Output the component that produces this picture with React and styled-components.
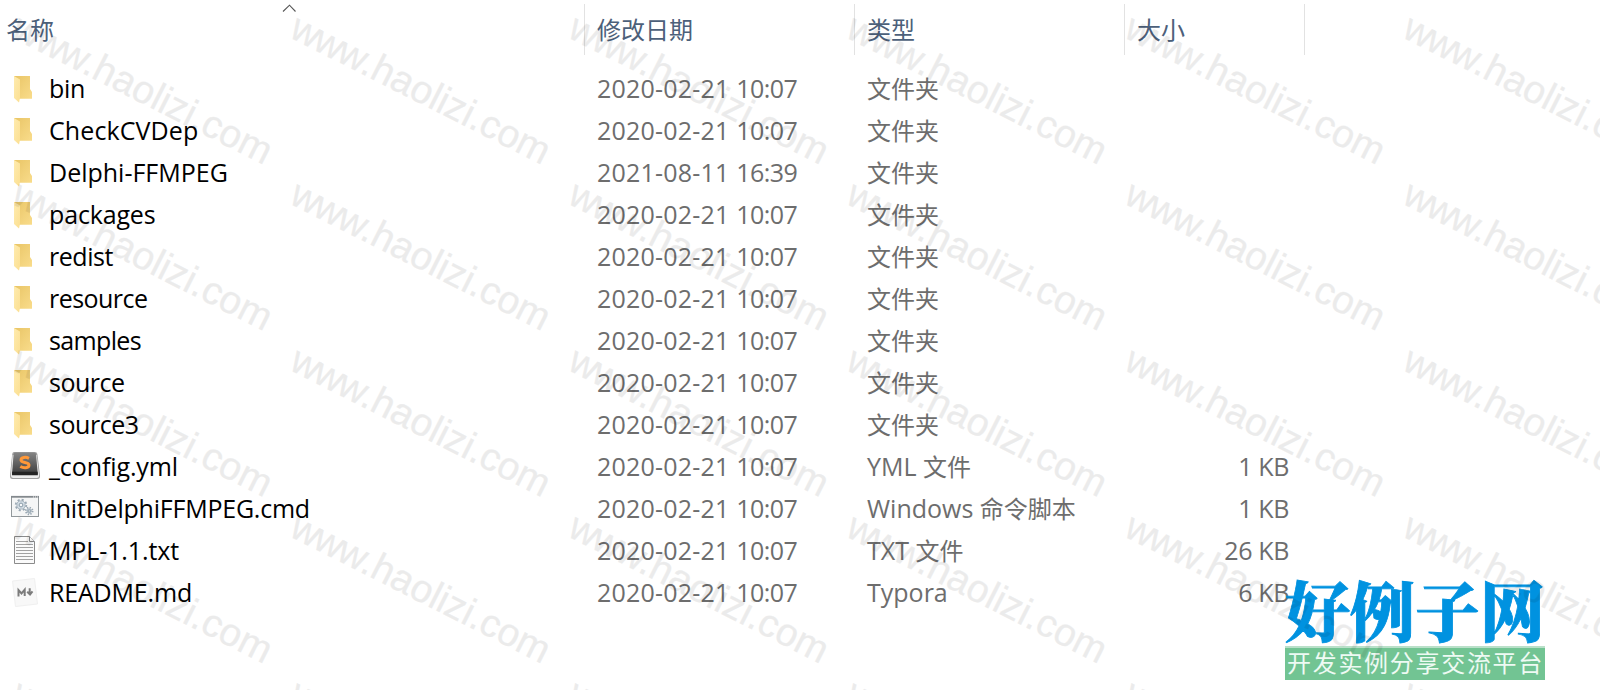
import React from 'react';
import styled, { createGlobalStyle } from 'styled-components';

const Global = createGlobalStyle`
  body { margin: 0; background: #fff; overflow: hidden; }
  * { box-sizing: border-box; }
`;

const Window = styled.main`
  position: relative;
  width: 1600px;
  height: 690px;
  overflow: hidden;
  background: #fff;
  font-family: 'Open Sans', 'Noto Sans CJK SC', sans-serif;
  font-size: 25px;
  color: #6d6d6d;
`;

const columns = '585px 270px 270px 180px';

const Header = styled.div`
  display: grid;
  grid-template-columns: ${columns};
  height: 51px;
  margin-top: 4px;
`;

const HeaderCell = styled.div`
  position: relative;
  display: flex;
  align-items: center;
  padding-left: ${(p) => p.$pad}px;
  padding-bottom: 1px;
  border-right: 1px solid #e2e2e2;
  font-family: 'Noto Sans CJK SC', sans-serif;
  font-size: 24px;
  line-height: 36px;
  color: #4c607a;
`;

const SortArrow = styled.svg`
  position: absolute;
  left: 282px;
  top: 0;
`;

const List = styled.div`
  padding-top: 13px;
`;

const Row = styled.div`
  display: grid;
  grid-template-columns: ${columns};
  height: 42px;
  line-height: 40px;
  white-space: nowrap;
`;

const NameCell = styled.div`
  display: flex;
  align-items: flex-start;
  padding-left: 9px;
  color: #000;
`;

const IconBox = styled.span`
  display: flex;
  width: 40px;
  height: 34px;
  margin-top: 4px;
  flex: none;
`;

const Label = styled.span`
  letter-spacing: ${(p) => p.$track || 0}px;
`;

const Cell = styled.div`
  padding-left: 12px;
`;

const Day = styled.span`
  letter-spacing: 0.2px;
`;

const Time = styled.span`
  letter-spacing: -0.5px;
`;

const SizeCell = styled.div`
  padding-right: 16px;
  text-align: right;
  letter-spacing: -0.35px;
`;

const Han = styled.span`
  font-family: 'Noto Sans CJK SC', sans-serif;
  font-size: 24px;
  line-height: 1;
`;

const Watermark = styled.svg`
  position: absolute;
  inset: 0;
  pointer-events: none;
`;

const Brand = styled.div`
  position: absolute;
  left: 1285px;
  top: 576px;
  width: 260px;
  height: 104px;
`;

const BrandName = styled.div`
  height: 70px;
  font-family: 'Noto Serif CJK SC', 'Noto Sans CJK SC', serif;
  font-weight: 900;
  font-size: 65px;
  line-height: 64px;
  white-space: nowrap;
  color: #0092e0;
  -webkit-text-stroke: 0.8px #0092e0;
`;

const Slogan = styled.div`
  height: 34px;
  padding-left: 2px;
  border-top: 2px solid #b9e0c9;
  background: #72c493;
  font-family: 'Noto Sans CJK SC', sans-serif;
  font-size: 24px;
  letter-spacing: 1.7px;
  line-height: 27px;
  white-space: nowrap;
  color: #eefaf3;
`;

function FolderIcon() {
  return (
    <svg width="32" height="34" viewBox="0 0 32 34">
      <defs>
        <linearGradient id="back" x1="0" x2="1" y1="0" y2="1">
          <stop offset="0" stopColor="#e9c566" />
          <stop offset="1" stopColor="#f9dc8b" />
        </linearGradient>
        <linearGradient id="flap" x1="0" x2="1" y1="0" y2="1">
          <stop offset="0" stopColor="#ffebae" />
          <stop offset="1" stopColor="#fbdf92" />
        </linearGradient>
      </defs>
      <path d="M5 4H21V17L23 20V26.8H8Z" fill="url(#back)" />
      <path d="M5 4L11 7.5V26L10 30.5L5 26Z" fill="url(#flap)" />
    </svg>
  );
}

function SublimeIcon() {
  return (
    <svg width="32" height="34" viewBox="0 1 32 34">
      <defs>
        <linearGradient id="key" x1="0" x2="0" y1="0" y2="1">
          <stop offset="0" stopColor="#858585" />
          <stop offset="1" stopColor="#3e3e3e" />
        </linearGradient>
      </defs>
      <path d="M5 3H26Q28 3 28.4 5L31 26.5Q31.2 30 28.5 30H3.5Q0.8 30 1 26.5L3.2 5Q3.5 3 5 3Z" fill="#a0a0a0" />
      <path d="M3.6 6L1.9 26.5Q1.8 28.9 4 28.9H28Q30.3 28.9 30.1 26.5L27.7 6Z" fill="#ededed" />
      <path d="M6 3.5H25Q26.7 3.5 27 5L28.8 25H3L4.6 5Q4.8 3.5 6 3.5Z" fill="url(#key)" />
      <path d="M3.2 22.8H28.6L28.9 26.3H3Z" fill="#242424" />
      <path d="M20 9.3C17 7.8 12 8 12 11C12 14.3 20 12.5 20 16C20 19.3 14.5 19.3 11.3 17.5" fill="none" stroke="#ff9838" strokeWidth="3" />
    </svg>
  );
}

function Gear({ x, y, r }) {
  const step = (r * Math.PI) / 8;
  return (
    <g transform={`translate(${x} ${y})`}>
      <circle r={r} fill="none" stroke="#9aa8b3" strokeWidth="1.8" strokeDasharray={`${step} ${step}`} />
      <circle r={r - 1.2} fill="#d5dfe6" stroke="#9dabb6" strokeWidth="0.8" />
      <circle r={r * 0.36} fill="#f7f9fa" stroke="#8799a6" strokeWidth="1" />
    </g>
  );
}

function CommandIcon() {
  return (
    <svg width="32" height="34" viewBox="0 1 32 34">
      <rect x="2.5" y="5.5" width="27" height="20" fill="#f5f6f6" stroke="#92989b" />
      <path d="M2 5.8H30" stroke="#83898d" strokeWidth="1.8" />
      <path d="M24 6H25M26 6H27M28 6H29" stroke="#eee" />
      <Gear x={12} y={14} r={5.3} />
      <Gear x={20.2} y={20} r={3.4} />
    </svg>
  );
}

function TextIcon() {
  return (
    <svg width="32" height="34" viewBox="0 1 32 34">
      <path d="M5.5 3.5H20.5L25.5 8.5V30.5H5.5Z" fill="#fafafa" stroke="#8b8b8b" />
      <path d="M20.5 3.5V8.5H25.5" fill="#fff" stroke="#8b8b8b" />
      <path d="M7 8.5H19M7 11.5H24M7 14.5H24M7 17.5H24M7 20.5H24M7 23.5H24M7 26.5H24" stroke="#a2a2a2" />
    </svg>
  );
}

function MarkdownIcon() {
  return (
    <svg width="32" height="34" viewBox="0 0.5 32 34">
      <path d="M3.5 5.5L25.5 3L28.5 28.5L6.5 31Z" fill="#f8f8f8" stroke="#f0f0f0" />
      <path d="M9.5 21V14.7L12.5 18L15.7 14.2V20.5" fill="none" stroke="#7c7c7c" strokeWidth="2" />
      <path d="M20.7 12.8V18.5M18.2 16.3L21 19L23.5 15.8" fill="none" stroke="#7c7c7c" strokeWidth="2" />
    </svg>
  );
}

const icons = { folder: FolderIcon, yml: SublimeIcon, cmd: CommandIcon, txt: TextIcon, md: MarkdownIcon };

const files = [
  { name: 'bin', track: -0.3 },
  { name: 'CheckCVDep', track: 0.1 },
  { name: 'Delphi-FFMPEG', day: '2021-08-11', time: '16:39' },
  { name: 'packages', track: -0.15 },
  { name: 'redist', track: -0.45 },
  { name: 'resource', track: -0.55 },
  { name: 'samples', track: -0.65 },
  { name: 'source', track: -0.5 },
  { name: 'source3', track: -0.45 },
  { name: '_config.yml', track: -0.1, icon: 'yml', kind: 'YML ', han: '文件', size: '1 KB' },
  { name: 'InitDelphiFFMPEG.cmd', track: -0.22, icon: 'cmd', kind: 'Windows ', han: '命令脚本', size: '1 KB' },
  { name: 'MPL-1.1.txt', track: -0.12, icon: 'txt', kind: 'TXT ', han: '文件', size: '26 KB' },
  { name: 'README.md', track: -0.18, icon: 'md', kind: 'Typora', han: '', size: '6 KB' },
];

function FileRow({ file }) {
  const Icon = icons[file.icon || 'folder'];
  return (
    <Row>
      <NameCell>
        <IconBox><Icon /></IconBox>
        <Label $track={file.track}>{file.name}</Label>
      </NameCell>
      <Cell>
        <Day>{file.day || '2020-02-21'} </Day>
        <Time>{file.time || '10:07'}</Time>
      </Cell>
      <Cell>
        {file.kind}
        <Han>{file.han ?? '文件夹'}</Han>
      </Cell>
      <SizeCell>{file.size}</SizeCell>
    </Row>
  );
}

const marks = [];
for (let r = 0; r < 5; r += 1) {
  for (let c = 0; c < 6; c += 1) marks.push({ x: 9.5 + c * 278.2, y: 36.5 + r * 166.3 });
}

export default function App() {
  return (
    <Window>
      <Global />
      <Header>
        <HeaderCell $pad={6}>
          名称
          <SortArrow width="14" height="9" viewBox="0 0 14 9">
            <path d="M1 7.5L7.5 1.2L13.5 7.5" fill="none" stroke="#555" strokeWidth="1.1" />
          </SortArrow>
        </HeaderCell>
        <HeaderCell $pad={12}>修改日期</HeaderCell>
        <HeaderCell $pad={12}>类型</HeaderCell>
        <HeaderCell $pad={12}>大小</HeaderCell>
      </Header>
      <List>
        {files.map((f) => <FileRow key={f.name} file={f} />)}
      </List>
      <Brand>
        <BrandName>好例子网</BrandName>
        <Slogan>开发实例分享交流平台</Slogan>
      </Brand>
      <Watermark width="1600" height="690">
        {marks.map((m) => (
          <text
            key={`${m.x}-${m.y}`}
            transform={`translate(${m.x} ${m.y}) rotate(26.8)`}
            fontFamily="Liberation Sans, Arial, sans-serif"
            fontSize="39"
            fill="#000"
            stroke="#000"
            strokeWidth="0.4"
            opacity="0.075"
          >
            <tspan letterSpacing="-1.7">www</tspan>.haolizi.com
          </text>
        ))}
      </Watermark>
    </Window>
  );
}
